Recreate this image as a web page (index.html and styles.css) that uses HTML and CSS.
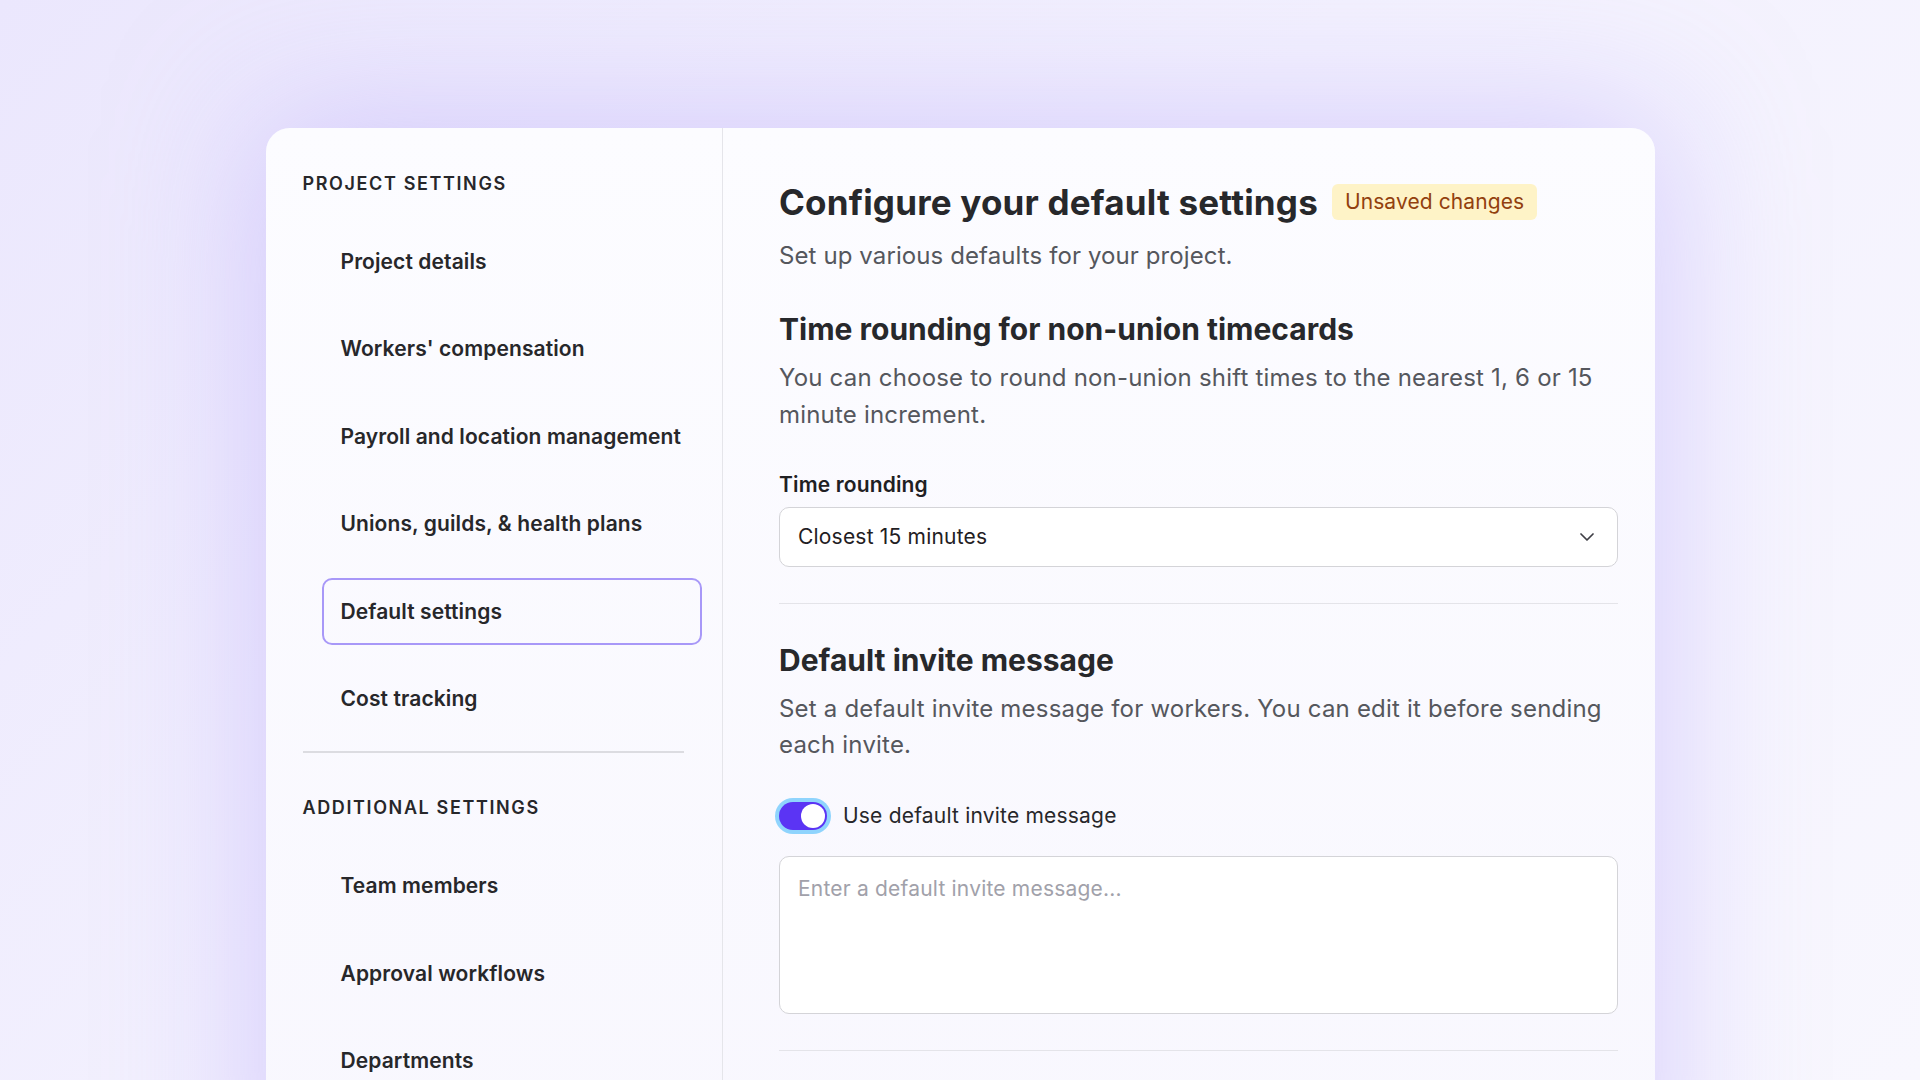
FILE: index.html
```html
<!DOCTYPE html>
<html lang="en">
<head>
<meta charset="UTF-8">
<meta name="viewport" content="width=device-width, initial-scale=1.0">
<title>Default settings</title>
<link rel="stylesheet" href="styles.css">
</head>
<body>
<div class="page">
  <div class="card">
    <aside class="sidebar">
      <h4 class="nav-title">Project settings</h4>
      <ul class="nav">
        <li class="nav-item">Project details</li>
        <li class="nav-item">Workers' compensation</li>
        <li class="nav-item">Payroll and location management</li>
        <li class="nav-item">Unions, guilds, &amp; health plans</li>
        <li class="nav-item active">Default settings</li>
        <li class="nav-item">Cost tracking</li>
      </ul>
      <hr class="nav-divider">
      <h4 class="nav-title">Additional settings</h4>
      <ul class="nav">
        <li class="nav-item">Team members</li>
        <li class="nav-item">Approval workflows</li>
        <li class="nav-item">Departments</li>
      </ul>
    </aside>

    <main class="content">
      <div class="title-row">
        <h1 class="title">Configure your default settings</h1>
        <span class="badge">Unsaved changes</span>
      </div>
      <p class="subtitle">Set up various defaults for your project.</p>

      <section class="section">
        <h2 class="section-title">Time rounding for non-union timecards</h2>
        <p class="section-desc">You can choose to round non-union shift times to the nearest 1, 6 or 15 minute increment.</p>
        <label class="field-label">Time rounding</label>
        <div class="select">
          <span>Closest 15 minutes</span>
          <svg class="chevron" width="14" height="8" viewBox="0 0 14 8" fill="none">
            <polyline points="1,1 7,7 13,1" stroke="#3f3f46" stroke-width="1.7" stroke-linecap="round" stroke-linejoin="round"/>
          </svg>
        </div>
      </section>

      <hr class="divider">

      <section class="section">
        <h2 class="section-title">Default invite message</h2>
        <p class="section-desc">Set a default invite message for workers. You can edit it before sending each invite.</p>
        <div class="toggle-row">
          <span class="toggle on"><span class="knob"></span></span>
          <span class="toggle-label">Use default invite message</span>
        </div>
        <textarea class="textarea" placeholder="Enter a default invite message..."></textarea>
      </section>

      <hr class="divider">
    </main>
  </div>
</div>
</body>
</html>
```

FILE: styles.css
```css
* {
  box-sizing: border-box;
}
html,
body {
  margin: 0;
  height: 100%;
}
body {
  font-family: Inter, "Noto Sans", sans-serif;
  color: #27272a;
  overflow: hidden;
  background: linear-gradient(135deg, #ebe7fd 0%, #f3f1fe 45%, #f8f7fe 100%);
}
.page {
  padding: 128px 0 0 266px;
}
.card {
  width: 1389px;
  height: 1100px;
  display: grid;
  grid-template-columns: 457px 1fr;
  background: linear-gradient(180deg, #fcfcff 0%, #f8f7fe 100%);
  border-radius: 24px;
  box-shadow: 0 0 140px 10px rgba(186, 170, 252, 0.5);
}

/* sidebar */
.sidebar {
  border-right: 1px solid #e5e5ea;
  padding: 43.5px 20px 0 36.5px;
}
.nav-title {
  margin: 0;
  font-size: 18px;
  line-height: 24px;
  font-weight: 600;
  letter-spacing: 0.09em;
  text-transform: uppercase;
  color: #27272a;
}
.nav {
  list-style: none;
  margin: 32px 0 0 19px;
  padding: 0;
  display: flex;
  flex-direction: column;
  gap: 20.5px;
}
.nav-item {
  height: 67px;
  display: flex;
  align-items: center;
  padding-left: 17px;
  border: 2px solid transparent;
  border-radius: 10px;
  font-size: 21px;
  font-weight: 600;
  letter-spacing: 0.1px;
  color: #27272a;
}
.nav-item.active {
  border-color: #a898f8;
}
.nav-divider {
  border: 0;
  border-top: 2px solid #dcdce1;
  margin: 18.5px 18px 43.5px 0;
}

/* main */
.content {
  padding: 0 37px 0 56px;
  display: flex;
  flex-direction: column;
}
.title-row {
  display: flex;
  align-items: center;
  gap: 14px;
  margin-top: 53.6px;
  height: 40px;
}
.title {
  margin: 0;
  font-size: 35px;
  line-height: 40px;
  font-weight: 700;
  letter-spacing: 0.2px;
  color: #27282b;
}
.badge {
  height: 36px;
  display: flex;
  align-items: center;
  padding: 0 13px;
  border-radius: 6px;
  background: #fef3c7;
  color: #92400e;
  font-size: 21px;
  letter-spacing: 0.1px;
}
.subtitle {
  margin: 16.3px 0 0;
  font-size: 24px;
  line-height: 36px;
  letter-spacing: 0.1px;
  color: #55575d;
}
.section {
  display: flex;
  flex-direction: column;
}
.section-title {
  margin: 37.6px 0 0;
  font-size: 30px;
  line-height: 36px;
  font-weight: 700;
  color: #27282b;
}
.section-desc {
  margin: 12.5px 0 0;
  font-size: 24px;
  line-height: 36.6px;
  letter-spacing: 0.2px;
  color: #55575d;
}
.field-label {
  margin-top: 37.5px;
  font-size: 21px;
  line-height: 28px;
  font-weight: 600;
  letter-spacing: 0.15px;
  color: #1f2023;
}
.select {
  margin-top: 8.3px;
  height: 60px;
  display: flex;
  align-items: center;
  justify-content: space-between;
  padding: 0 23px 0 18px;
  background: #fff;
  border: 1.5px solid #d4d4d8;
  border-radius: 10px;
  font-size: 21px;
  letter-spacing: 0.2px;
  color: #1f2023;
}
.divider {
  border: 0;
  border-top: 1.5px solid #e4e4e9;
  margin: 36.5px 0 0;
  width: 100%;
}
.toggle-row {
  margin-top: 38.2px;
  display: flex;
  align-items: center;
  gap: 16px;
  height: 28px;
}
.toggle {
  width: 48px;
  height: 28px;
  border-radius: 14px;
  padding: 2px;
  display: flex;
  background: #d4d4d8;
}
.toggle.on {
  background: #5b34f4;
  justify-content: flex-end;
  box-shadow: 0 0 0 4px #8fd4fd;
}
.knob {
  width: 24px;
  height: 24px;
  border-radius: 50%;
  background: #fff;
}
.toggle-label {
  font-size: 21px;
  line-height: 28px;
  letter-spacing: 0.2px;
  color: #27272a;
}
.textarea {
  margin-top: 25.6px;
  height: 158px;
  width: 100%;
  padding: 18px 18px 15px;
  resize: none;
  background: #fff;
  border: 1.5px solid #d4d4d8;
  border-radius: 10px;
  font-family: Inter, "Noto Sans", sans-serif;
  font-size: 21px;
  line-height: 28px;
  letter-spacing: 0.2px;
  color: #1f2023;
}
.textarea::placeholder {
  color: #a1a1aa;
}
```
